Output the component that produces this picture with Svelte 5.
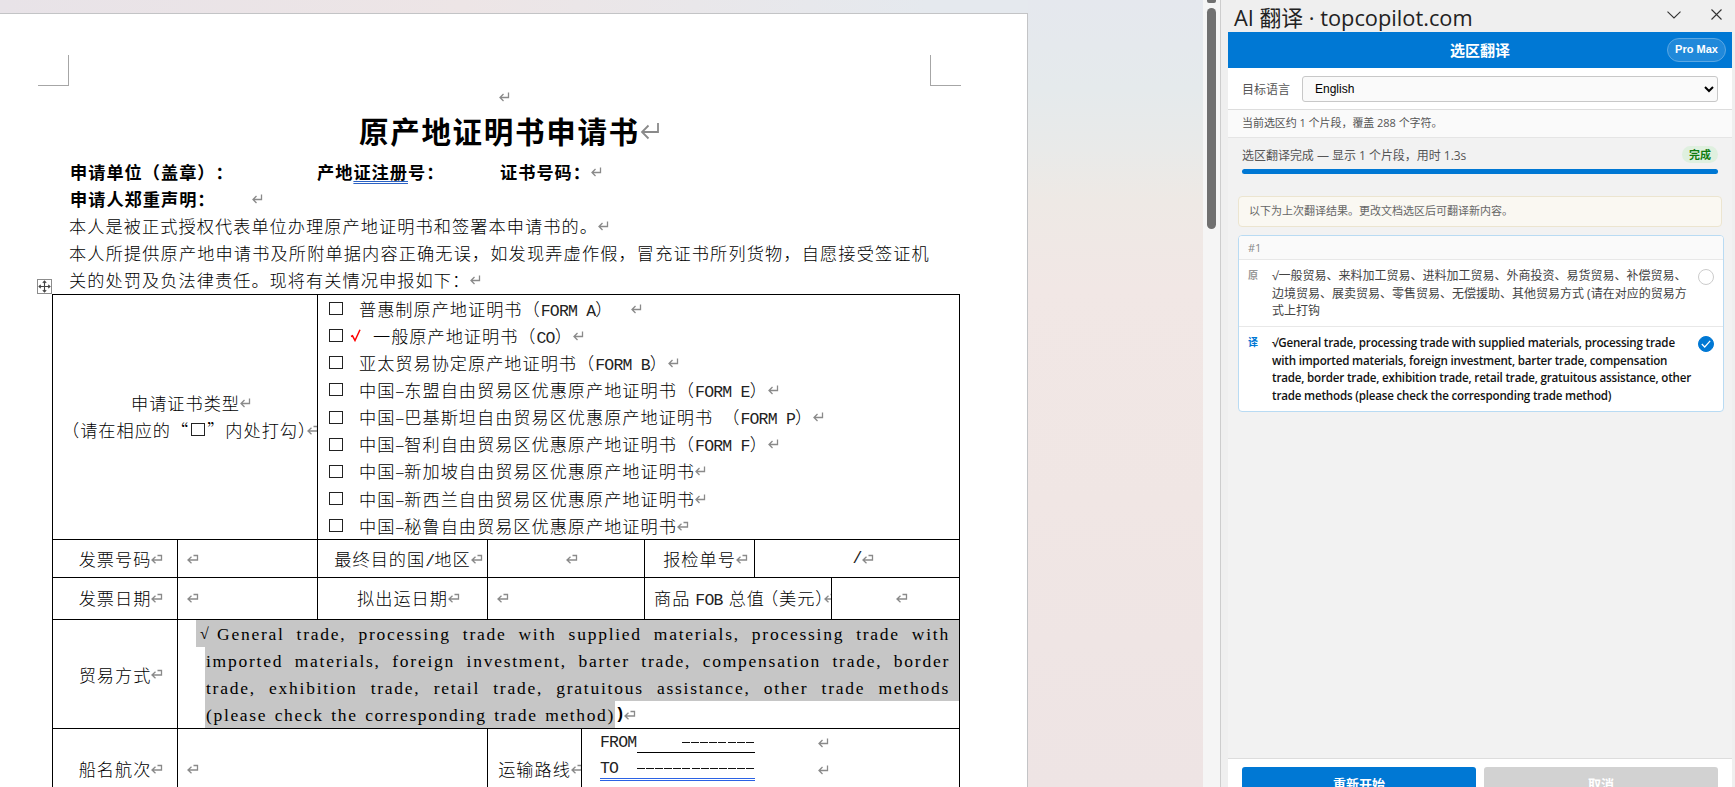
<script>
  const certTypes = [
    { name: "普惠制原产地证明书", form: "FORM A", tail: 18 },
    { name: "一般原产地证明书", form: "CO", checked: true },
    { name: "亚太贸易协定原产地证明书", form: "FORM B" },
    { prefix: "中国", name: "东盟自由贸易区优惠原产地证明书", form: "FORM E" },
    {
      prefix: "中国",
      name: "巴基斯坦自由贸易区优惠原产地证明书",
      form: "FORM P",
      spaced: true
    },
    { prefix: "中国", name: "智利自由贸易区优惠原产地证明书", form: "FORM F" },
    { prefix: "中国", name: "新加坡自由贸易区优惠原产地证明书" },
    { prefix: "中国", name: "新西兰自由贸易区优惠原产地证明书" },
    { prefix: "中国", name: "秘鲁自由贸易区优惠原产地证明书", cellEnd: true }
  ];

  const original = [
    "√一般贸易、来料加工贸易、进料加工贸易、外商投资、易货贸易、补偿贸易、",
    "边境贸易、展卖贸易、零售贸易、无偿援助、其他贸易方式 (请在对应的贸易方",
    "式上打钩"
  ];
  const translated = [
    "√General trade, processing trade with supplied materials, processing trade",
    "with imported materials, foreign investment, barter trade, compensation",
    "trade, border trade, exhibition trade, retail trade, gratuitous assistance, other",
    "trade methods (please check the corresponding trade method)"
  ];

  let language = "English";
  let picked = "translated";
</script>

{#snippet para()}
  <svg class="mark" width="11" height="10" viewBox="0 0 11 10">
    <path d="M9.5 0.5V5.5H1M4.5 2L1 5.5L4.5 9" />
  </svg>
{/snippet}

{#snippet cellEnd()}
  <svg class="mark" width="12" height="10" viewBox="0 0 12 10">
    <path d="M6.5 1.5H10.5V6H1M4.5 2.8L1 6L4.5 9.2" />
  </svg>
{/snippet}

<div class="window">
  <div class="canvas">
    <div class="sheet">
      <div class="corner corner--left"></div>
      <div class="corner corner--right"></div>
      <div class="handle">
        <svg width="15" height="15" viewBox="0 0 15 15">
          <path
            d="M7.5 2V13M2 7.5H13M5.8 3.8L7.5 2L9.2 3.8M5.8 11.2L7.5 13L9.2 11.2M3.8 5.8L2 7.5L3.8 9.2M11.2 5.8L13 7.5L11.2 9.2"
          />
        </svg>
      </div>

      <div class="blank">{@render para()}</div>
      <h1>
        原产地证明书申请书<svg class="mark" width="20" height="18" viewBox="0 0 20 18">
          <path d="M18 1V10H2M8.5 3.5L2 10L8.5 16.5" />
        </svg>
      </h1>

      <div class="line line--bold">
        <span class="applicant">申请单位（盖章）：</span>
        <span class="register">产地<span class="squiggle">证注册</span>号：</span>
        <span class="certno">证书号码：</span>{@render para()}
      </div>
      <div class="line line--bold">
        <span class="declare">申请人郑重声明：</span>{@render para()}
      </div>
      <div class="line">本人是被正式授权代表单位办理原产地证明书和签署本申请书的。{@render para()}</div>
      <div class="line line--full">
        本人所提供原产地申请书及所附单据内容正确无误，如发现弄虚作假，冒充证书所列货物，自愿接受签证机
      </div>
      <div class="line">关的处罚及负法律责任。现将有关情况申报如下：{@render para()}</div>

      <div class="table">
        <div class="row row--types">
          <div class="cell w265 kinds">
            <div class="center"><span>申请证书类型</span>{@render para()}</div>
            <div class="hint">（请在相应的“<i class="box"></i>”内处打勾<span class="close">）</span>{@render cellEnd()}</div>
          </div>
          <div class="cell rest types">
            {#each certTypes as type}
              <div class="type">
                <i class="box"></i>
                {#if type.checked}
                  <svg class="tick" width="11" height="13" viewBox="0 0 11 13">
                    <path d="M1 7.5L2.5 6.8L5 11.5L10 0.8" />
                  </svg>
                {/if}
                <span class="type__text" class:shifted={type.checked}>
                  {#if type.prefix}{type.prefix}<span class="dash">–</span>{/if}{type.name}{#if type.spaced}<span class="half"></span>{/if}{#if type.form}（<span class="latin">{type.form}</span>）{/if}
                </span>
                <span style="width: {type.tail || 0}px"></span>
                {#if type.cellEnd}{@render cellEnd()}{:else}{@render para()}{/if}
              </div>
            {/each}
          </div>
        </div>

        <div class="row row--invoice">
          <div class="cell w125 center"><span>发票号码</span>{@render cellEnd()}</div>
          <div class="cell w140 start">{@render cellEnd()}</div>
          <div class="cell w170 center">
            <span>最终目的国<span class="latin">/</span>地区</span>{@render cellEnd()}
          </div>
          <div class="cell w157 center">{@render cellEnd()}</div>
          <div class="cell w110 center"><span>报检单号</span>{@render cellEnd()}</div>
          <div class="cell rest center"><span class="latin">/</span>{@render cellEnd()}</div>
        </div>

        <div class="row row--date">
          <div class="cell w125 center"><span>发票日期</span>{@render cellEnd()}</div>
          <div class="cell w140 start">{@render cellEnd()}</div>
          <div class="cell w170 center"><span>拟出运日期</span>{@render cellEnd()}</div>
          <div class="cell w157 start">{@render cellEnd()}</div>
          <div class="cell w187 fob">
            <span>商品<span class="latin gap">FOB</span>总值<span class="open">（</span>美元<span class="close">）</span></span>{@render cellEnd()}
          </div>
          <div class="cell rest center">{@render cellEnd()}</div>
        </div>

        <div class="row row--trade">
          <div class="cell w125 center"><span>贸易方式</span>{@render cellEnd()}</div>
          <div class="cell rest trade">
            <div class="sel sel--first">
              <span class="root">√</span><span class="words">General trade, processing trade with supplied materials, processing trade with</span>
            </div>
            <div class="sel">
              <span class="words">imported materials, foreign investment, barter trade, compensation trade, border</span>
            </div>
            <div class="sel">
              <span class="words">trade, exhibition trade, retail trade, gratuitous assistance, other trade methods</span>
            </div>
            <div class="lastline">
              <div class="sel sel--last">
                <span class="words">(please check the corresponding trade method)</span>
              </div>
              <b class="latin">)</b>{@render cellEnd()}
            </div>
          </div>
        </div>

        <div class="row row--route">
          <div class="cell w125 center"><span>船名航次</span>{@render cellEnd()}</div>
          <div class="cell w310 start">{@render cellEnd()}</div>
          <div class="cell w94 center"><span>运输路线</span>{@render cellEnd()}</div>
          <div class="cell rest route">
            <div class="route__line">
              <span class="latin">FROM</span>
              <span class="ruled"><i class="dashes dashes--short"></i></span>
              {@render para()}
            </div>
            <div class="route__line">
              <span class="linked"><span class="latin">TO</span><i class="dashes"></i></span>
              {@render para()}
            </div>
          </div>
        </div>
      </div>
    </div>
  </div>

  <div class="scroll">
    <div class="scroll__up"></div>
    <div class="scroll__thumb"></div>
  </div>

  <div class="pane">
    <div class="titlebar">
      <span class="titlebar__name">AI 翻译 · topcopilot.com</span>
      <svg width="14" height="8" viewBox="0 0 14 8"><path d="M0.5 0.7L7 7L13.5 0.7" /></svg>
      <svg width="11" height="11" viewBox="0 0 11 11"><path d="M0.5 0.5L10.5 10.5M10.5 0.5L0.5 10.5" /></svg>
    </div>

    <div class="addin">
      <header>
        <span>选区翻译</span>
        <span class="plan">Pro Max</span>
      </header>

      <div class="lang">
        <label for="lang">目标语言</label>
        <select id="lang" bind:value={language}>
          <option>English</option>
        </select>
      </div>

      <div class="info">当前选区约 1 个片段，覆盖 288 个字符。</div>

      <div class="status">
        <div class="status__row">
          <span>选区翻译完成 — 显示 1 个片段，用时 1.3s</span>
          <span class="done">完成</span>
        </div>
        <div class="progress"></div>
      </div>

      <div class="results">
        <div class="notice">以下为上次翻译结果。更改文档选区后可翻译新内容。</div>
        <div class="card">
          <div class="card__head">#1</div>
          <div class="pair" on:click={() => (picked = "original")} role="presentation">
            <span class="pair__tag">原</span>
            <div class="pair__text">
              {#each original as line}<div>{line}</div>{/each}
            </div>
            <span class="radio" class:on={picked === "original"}></span>
          </div>
          <div class="pair pair--new" on:click={() => (picked = "translated")} role="presentation">
            <span class="pair__tag">译</span>
            <div class="pair__text">
              {#each translated as line}<div>{line}</div>{/each}
            </div>
            <span class="radio" class:on={picked === "translated"}>
              {#if picked === "translated"}
                <svg width="10" height="8" viewBox="0 0 10 8"><path d="M0.8 4L3.7 7L9.2 0.9" /></svg>
              {/if}
            </span>
          </div>
        </div>
      </div>

      <footer>
        <button>重新开始</button>
        <button class="off">取消</button>
      </footer>
    </div>
  </div>
</div>

<style>
  :global(body) {
    margin: 0;
    overflow: hidden;
  }
  * {
    box-sizing: border-box;
  }
  .window {
    display: flex;
    width: 1735px;
    height: 787px;
    overflow: hidden;
    font-family: "Open Sans", "Noto Sans CJK SC", sans-serif;
  }

  /* document */
  .canvas {
    width: 1203px;
    height: 787px;
    padding-top: 13px;
    overflow: hidden;
    background:
      linear-gradient(90deg, #e8e3e8 0, #ede5e6 45%, #e5e9ee 90%) 0 0 / 1028px 13px no-repeat,
      linear-gradient(#e5e8ee 0, #e5eaec 90px, #e9eae9 150px, #eee9e5 200px, #f1e7e5 290px, #f0e6e4 500px, #eee4e4);
  }
  .sheet {
    position: relative;
    width: 1028px;
    height: 900px;
    border-top: 1px solid #c3c4c6;
    border-right: 1px solid #c3c4c6;
    background: #fff;
    color: #000;
    font-family: "Noto Sans CJK SC", sans-serif;
    font-weight: 300;
    font-size: 17.2px;
    letter-spacing: 0.98px;
    white-space: nowrap;
    text-spacing-trim: space-all;
  }
  .corner {
    position: absolute;
    top: 41px;
    width: 31px;
    height: 31px;
    border-bottom: 1px solid #a6a6a6;
  }
  .corner--left {
    left: 38px;
    border-right: 1px solid #a6a6a6;
  }
  .corner--right {
    left: 930px;
    border-left: 1px solid #a6a6a6;
  }
  .handle {
    position: absolute;
    left: 37px;
    top: 265px;
    width: 15px;
    height: 15px;
    border: 1px solid #8c8c8c;
  }
  .handle svg {
    display: block;
    margin: -1px;
    fill: none;
    stroke: #444;
    stroke-width: 1.1;
  }
  .mark {
    flex: none;
    fill: none;
    stroke: #8a8a8a;
    stroke-width: 1.3;
  }
  .blank {
    display: flex;
    align-items: center;
    height: 27px;
    margin: 69px 0 0 499px;
  }
  h1 {
    display: flex;
    align-items: center;
    height: 40px;
    margin: 0 0 8px 359px;
    font-size: 29.5px;
    font-weight: 700;
    letter-spacing: 1.7px;
    color: #000;
  }
  h1 .mark {
    position: relative;
    top: 1px;
    stroke-width: 1.8;
  }
  .line {
    display: flex;
    align-items: center;
    height: 27px;
    padding-left: 69px;
    letter-spacing: 1.05px;
  }
  .line--bold {
    padding-left: 70px;
    font-weight: 700;
    letter-spacing: 1px;
  }
  .line--full {
    letter-spacing: 1.13px;
  }
  .applicant {
    width: 247px;
  }
  .register {
    width: 183px;
  }
  .certno {
    width: 91px;
  }
  .declare {
    width: 182px;
  }
  .squiggle {
    text-decoration: underline double #2b62c4 1px;
    text-underline-offset: 2px;
  }

  .table {
    width: 908px;
    margin: 1px 0 0 52px;
    border-right: 1px solid #000;
  }
  .row {
    display: flex;
    border-top: 1px solid #000;
  }
  .row--types {
    height: 245px;
  }
  .row--invoice {
    height: 38px;
  }
  .row--date {
    height: 42px;
  }
  .row--trade {
    height: 109px;
  }
  .row--route {
    height: 82px;
  }
  .cell {
    flex: none;
    border-left: 1px solid #000;
    overflow: hidden;
  }
  .w94 { width: 94px; }
  .w110 { width: 110px; }
  .w125 { width: 125px; }
  .w140 { width: 140px; }
  .w157 { width: 157px; }
  .w170 { width: 170px; }
  .w187 { width: 187px; }
  .w265 { width: 265px; }
  .w310 { width: 310px; }
  .cell.rest {
    flex: 1;
  }
  .center,
  .start,
  .fob {
    display: flex;
    align-items: center;
  }
  .row--date .cell,
  .row--route .cell {
    padding-bottom: 2px;
  }
  .center {
    justify-content: center;
  }
  /* the end mark takes no room when the text is centred */
  .center .mark {
    margin-right: -12px;
  }
  .start {
    padding-left: 9px;
  }
  .fob {
    padding-left: 9px;
  }
  .kinds {
    display: flex;
    flex-direction: column;
    justify-content: center;
    padding-bottom: 2px;
  }
  .kinds > div {
    height: 27px;
  }
  .hint {
    display: flex;
    align-items: center;
    padding-left: 9px;
  }
  .hint .box {
    margin: 0 2px;
  }
  .close {
    display: inline-block;
    width: 9px;
  }
  .open {
    display: inline-block;
    width: 14px;
    text-indent: -4px;
  }
  .box {
    flex: none;
    width: 14px;
    height: 13px;
    border: 1px solid #222;
  }
  .type {
    display: flex;
    align-items: center;
    height: 27.15px;
    padding-left: 11px;
  }
  .type__text {
    margin: -1px 0 0 16px;
  }
  .type__text.shifted {
    margin-left: 12px;
  }
  .type .tick {
    margin-left: 7px;
    fill: none;
    stroke: #f00;
    stroke-width: 1.5;
  }
  .dash {
    display: inline-block;
    width: 9px;
    text-align: center;
    letter-spacing: 0;
  }
  .half {
    display: inline-block;
    width: 9px;
  }
  .latin {
    font-family: "Liberation Mono", monospace;
    font-weight: 400;
    font-size: 16.5px;
    letter-spacing: -0.8px;
    color: #222;
  }
  .latin.gap {
    margin: 0 6px 0 5px;
  }
  b.latin {
    font-weight: 700;
    color: #000;
  }
  .trade {
    padding-left: 27px;
  }
  .sel {
    display: flex;
    align-items: center;
    height: 27.1px;
    margin-right: -2px;
    padding: 1px 11px 0 1px;
    background: #c6c6c6;
  }
  .words {
    flex: 1;
    font-family: "Liberation Serif", serif;
    font-weight: 400;
    font-size: 17.5px;
    letter-spacing: 1.75px;
    text-align: justify;
    text-align-last: justify;
  }
  .sel--first {
    margin-left: -9px;
    padding-left: 4px;
  }
  .root {
    width: 17px;
    font-family: "Liberation Serif", serif;
    font-size: 16px;
  }
  .lastline {
    display: flex;
    align-items: center;
  }
  .sel--last {
    width: 410px;
    margin-right: 0;
    padding-right: 0;
  }
  .sel--last .words {
    letter-spacing: 1.65px;
  }
  .route {
    padding-left: 18px;
  }
  .route__line {
    display: flex;
    align-items: center;
    height: 27px;
  }
  .ruled,
  .linked {
    display: flex;
    align-items: center;
    justify-content: flex-end;
    height: 20px;
  }
  .ruled {
    width: 118px;
    margin: 0 63px 0 1px;
    border-bottom: 1px solid #000;
  }
  .linked {
    justify-content: space-between;
    width: 155px;
    height: 22px;
    margin-right: 63px;
    border-bottom: 3px double #2b62e4;
  }
  .dashes {
    width: 118px;
    height: 1px;
    background: repeating-linear-gradient(90deg, #111 0 8px, #fff 8px 9.1px);
  }
  .dashes--short {
    width: 73px;
  }

  /* scrollbar */
  .scroll {
    width: 18px;
    padding-left: 4px;
    border-right: 1px solid #cdcdcd;
    background: #f5f5f5;
  }
  .scroll__up {
    width: 9px;
    height: 3px;
    margin-bottom: 5px;
    border-radius: 0 0 2px 2px;
    background: #707070;
  }
  .scroll__thumb {
    width: 9px;
    height: 221px;
    border-radius: 5px;
    background: #707070;
  }

  /* task pane */
  .pane {
    display: flex;
    flex-direction: column;
    width: 514px;
    padding: 0 3px 0 7px;
    background: #efefef;
  }
  .titlebar {
    display: flex;
    flex: none;
    align-items: center;
    height: 32px;
    padding: 0 10px 3px 6px;
  }
  .titlebar svg {
    margin-right: 30px;
    fill: none;
    stroke: #333;
    stroke-width: 1.1;
  }
  .titlebar svg:last-child {
    margin-right: 0;
  }
  .titlebar__name {
    flex: 1;
    padding-top: 6px;
    font-size: 21.8px;
    line-height: 28px;
    color: #222;
  }
  .addin {
    display: flex;
    flex: none;
    flex-direction: column;
    height: 777px;
    background: #f2f2f2;
    color: #555;
    font-size: 12px;
  }
  header {
    position: relative;
    display: flex;
    align-items: center;
    justify-content: center;
    height: 36px;
    padding-bottom: 2px;
    background: #0078d4;
    color: #fff;
    font-size: 15px;
    font-weight: 700;
  }
  .plan {
    position: absolute;
    right: 6px;
    top: 6px;
    width: 59px;
    height: 24px;
    border: 1px solid #5aa7e3;
    border-radius: 12px;
    background: #2189da;
    font: bold 11px/21px "Liberation Sans", sans-serif;
    text-align: center;
  }
  .lang {
    display: flex;
    align-items: center;
    height: 42px;
    padding: 0 14px;
    border-bottom: 1px solid #ddd;
    background: #fff;
  }
  .lang label {
    width: 60px;
  }
  select {
    flex: 1;
    height: 26px;
    padding: 0 0 0 8px;
    border: 1px solid #c8c8c8;
    border-radius: 3px;
    background-color: #fafafa;
    color: #000;
    font: 12px "Liberation Sans", sans-serif;
  }
  .info {
    height: 28px;
    padding: 0 14px;
    border-bottom: 1px solid #e5e5e5;
    background: #fafafa;
    font-size: 11px;
    line-height: 25px;
    letter-spacing: -0.05px;
  }
  .status {
    padding: 8px 14px 22px;
  }
  .status__row {
    display: flex;
    align-items: center;
    justify-content: space-between;
    height: 17px;
    margin-bottom: 6px;
    letter-spacing: -0.03px;
  }
  .done {
    width: 36px;
    height: 17px;
    border-radius: 9px;
    background: #dff0df;
    color: #107c10;
    font-size: 11px;
    font-weight: 700;
    line-height: 17px;
    text-align: center;
  }
  .progress {
    height: 5px;
    border-radius: 3px;
    background: #0078d4;
  }
  .results {
    flex: 1;
    padding: 0 8px 0 10px;
  }
  .notice {
    height: 31px;
    margin: 0 2px 8px 0;
    padding-left: 10px;
    border: 1px solid #ece5d0;
    border-radius: 4px;
    background: #faf8f2;
    color: #666;
    font-size: 11px;
    line-height: 28px;
  }
  .card {
    border: 1px solid #b9dbf3;
    border-radius: 4px;
    background: #fff;
    overflow: hidden;
  }
  .card__head {
    height: 24px;
    padding-left: 9px;
    border-bottom: 1px solid #e8e8e8;
    background: #fafafa;
    color: #888;
    font-size: 11px;
    line-height: 24px;
  }
  .pair {
    display: flex;
    height: 66px;
    padding: 7px 9px 0;
    line-height: 17.5px;
    white-space: nowrap;
  }
  .pair__tag {
    flex: none;
    width: 24px;
    color: #999;
    font-size: 10px;
    font-weight: 700;
  }
  .pair__text {
    flex: 1;
    min-width: 0;
    color: #444;
  }
  .pair--new {
    height: 85px;
    border-top: 1px solid #e8e8e8;
  }
  .pair--new .pair__tag {
    color: #0078d4;
  }
  .pair--new .pair__text {
    color: #111;
    font-size: 11.6px;
    font-weight: 600;
    letter-spacing: -0.19px;
  }
  .radio {
    display: flex;
    flex: none;
    align-items: center;
    justify-content: center;
    width: 16px;
    height: 16px;
    margin-top: 2px;
    border: 1px solid #ccc;
    border-radius: 50%;
    background: #fff;
  }
  .radio.on {
    border-color: #0078d4;
    background: #0078d4;
  }
  .radio svg {
    fill: none;
    stroke: #fff;
    stroke-width: 1.2;
  }
  footer {
    display: flex;
    flex: none;
    gap: 8px;
    padding: 8px 14px;
    border-top: 1px solid #ddd;
    background: #fff;
  }
  button {
    flex: 1;
    height: 34px;
    padding: 0 0 2px;
    border: 0;
    border-radius: 3px;
    background: #0078d4;
    color: #fff;
    font: bold 13px "Open Sans", "Noto Sans CJK SC", sans-serif;
  }
  .off {
    background: #d2d2d2;
  }
</style>
